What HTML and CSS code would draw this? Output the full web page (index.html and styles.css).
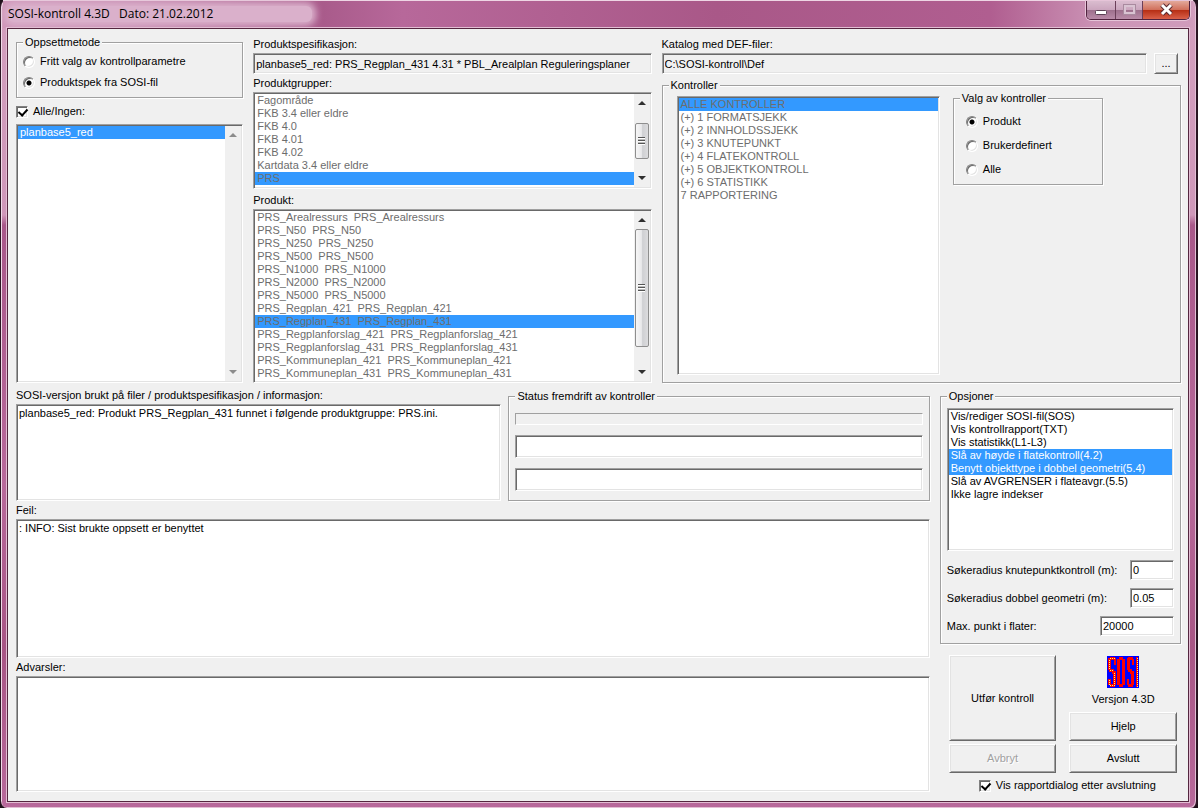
FILE: index.html
```html
<!DOCTYPE html>
<html lang="no">
<head>
<meta charset="utf-8">
<title>SOSI-kontroll 4.3D</title>
<link rel="stylesheet" href="styles.css">
</head>
<body>
<div class="window">
  <header class="titlebar">
    <h1 class="title">SOSI-kontroll 4.3D &nbsp; Dato: 21.02.2012</h1>
    <div class="caption-buttons">
      <button class="cap cap-min" type="button" aria-label="Minimer">
        <svg width="28" height="18" viewBox="0 0 28 18"><rect x="8.500" y="9.500" width="11" height="4" rx="1" fill="#fff" stroke="#5b4254"/></svg>
      </button>
      <button class="cap cap-max" type="button" aria-label="Maksimer" disabled>
        <svg width="26" height="18" viewBox="0 0 26 18"><rect x="9" y="5" width="9" height="7" fill="none" stroke="#d9c3d2" stroke-width="2"/><rect x="7.500" y="3.500" width="12" height="10" fill="none" stroke="#a98a9f"/></svg>
      </button>
      <button class="cap cap-close" type="button" aria-label="Lukk">
        <svg width="46" height="18" viewBox="0 0 46 18"><path d="M19 4L28 13M28 4L19 13" stroke="#5a2a30" stroke-width="5"/><path d="M19 4L28 13M28 4L19 13" stroke="#fff" stroke-width="3"/></svg>
      </button>
    </div>
  </header>

  <main class="client">
    <section class="top">
      <div class="col">
        <fieldset class="group">
          <legend>Oppsettmetode</legend>
          <div class="radios radios-setup">
            <label class="check"><input type="radio" name="oppsett"> Fritt valg av kontrollparametre</label>
            <label class="check"><input type="radio" name="oppsett" checked> Produktspek fra SOSI-fil</label>
          </div>
        </fieldset>
        <label class="check check-all"><input type="checkbox" checked> Alle/Ingen:</label>
        <div class="sunken listbox grow">
          <select multiple size="4" aria-label="Filer"><option selected>planbase5_red</option></select>
          <div class="scroll scroll-off" aria-hidden="true">
            <svg class="arrow" viewBox="0 0 8 4"><path d="M0 4L4 0L8 4Z"/></svg>
            <div class="track"></div>
            <svg class="arrow" viewBox="0 0 8 4"><path d="M0 0L8 0L4 4Z"/></svg>
          </div>
        </div>
      </div>

      <div class="col">
        <label class="caption" for="spec">Produktspesifikasjon:</label>
        <input class="sunken field gray" id="spec" readonly value="planbase5_red: PRS_Regplan_431 4.31 * PBL_Arealplan Reguleringsplaner">
        <label class="caption" for="grp">Produktgrupper:</label>
        <div class="sunken listbox list-groups">
          <select id="grp" size="7" disabled>
            <option>Fagområde</option><option>FKB 3.4 eller eldre</option><option>FKB 4.0</option><option>FKB 4.01</option><option>FKB 4.02</option><option>Kartdata 3.4 eller eldre</option><option selected>PRS</option><option>Sosi</option>
          </select>
          <div class="scroll" aria-hidden="true">
            <svg class="arrow" viewBox="0 0 8 4"><path d="M0 4L4 0L8 4Z"/></svg>
            <div class="track"><div class="thumb thumb-groups"><i class="grip"></i></div></div>
            <svg class="arrow" viewBox="0 0 8 4"><path d="M0 0L8 0L4 4Z"/></svg>
          </div>
        </div>
        <label class="caption" for="prod">Produkt:</label>
        <div class="sunken listbox grow">
          <select id="prod" size="4" disabled>
            <option>PRS_Arealressurs &nbsp;PRS_Arealressurs</option>
            <option>PRS_N50 &nbsp;PRS_N50</option>
            <option>PRS_N250 &nbsp;PRS_N250</option>
            <option>PRS_N500 &nbsp;PRS_N500</option>
            <option>PRS_N1000 &nbsp;PRS_N1000</option>
            <option>PRS_N2000 &nbsp;PRS_N2000</option>
            <option>PRS_N5000 &nbsp;PRS_N5000</option>
            <option>PRS_Regplan_421 &nbsp;PRS_Regplan_421</option>
            <option selected>PRS_Regplan_431 &nbsp;PRS_Regplan_431</option>
            <option>PRS_Regplanforslag_421 &nbsp;PRS_Regplanforslag_421</option>
            <option>PRS_Regplanforslag_431 &nbsp;PRS_Regplanforslag_431</option>
            <option>PRS_Kommuneplan_421 &nbsp;PRS_Kommuneplan_421</option>
            <option>PRS_Kommuneplan_431 &nbsp;PRS_Kommuneplan_431</option>
            <option>PRS_Servformål &nbsp;PRS_Servformål</option>
          </select>
          <div class="scroll" aria-hidden="true">
            <svg class="arrow" viewBox="0 0 8 4"><path d="M0 4L4 0L8 4Z"/></svg>
            <div class="track"><div class="thumb thumb-products"><i class="grip"></i></div></div>
            <svg class="arrow" viewBox="0 0 8 4"><path d="M0 0L8 0L4 4Z"/></svg>
          </div>
        </div>
      </div>

      <div class="col">
        <label class="caption" for="def">Katalog med DEF-filer:</label>
        <div class="path-row">
          <input class="sunken field gray" id="def" readonly value="C:\SOSI-kontroll\Def">
          <button class="btn btn-browse" type="button">...</button>
        </div>
        <fieldset class="group grow group-checks">
          <legend>Kontroller</legend>
          <div class="checks">
            <div class="sunken listbox">
              <select size="4" disabled aria-label="Kontroller">
                <option selected>ALLE KONTROLLER</option><option>(+) 1 FORMATSJEKK</option><option>(+) 2 INNHOLDSSJEKK</option><option>(+) 3 KNUTEPUNKT</option><option>(+) 4 FLATEKONTROLL</option><option>(+) 5 OBJEKTKONTROLL</option><option>(+) 6 STATISTIKK</option><option>7 RAPPORTERING</option>
              </select>
            </div>
            <fieldset class="group group-choice">
              <legend>Valg av kontroller</legend>
              <div class="radios radios-choice">
                <label class="check"><input type="radio" name="valg" checked> Produkt</label>
                <label class="check"><input type="radio" name="valg"> Brukerdefinert</label>
                <label class="check"><input type="radio" name="valg"> Alle</label>
              </div>
            </fieldset>
          </div>
        </fieldset>
      </div>
    </section>

    <section class="bottom">
      <div class="col">
        <div class="info-row">
          <div class="col">
            <label class="caption" for="info">SOSI-versjon brukt på filer / produktspesifikasjon / informasjon:</label>
            <textarea class="sunken memo grow" id="info" readonly>planbase5_red: Produkt PRS_Regplan_431 funnet i følgende produktgruppe: PRS.ini.</textarea>
          </div>
          <fieldset class="group group-status">
            <legend>Status fremdrift av kontroller</legend>
            <div class="status">
              <div class="bar"></div>
              <input class="sunken field" readonly aria-label="Status 1">
              <input class="sunken field" readonly aria-label="Status 2">
            </div>
          </fieldset>
        </div>
        <label class="caption" for="feil">Feil:</label>
        <textarea class="sunken memo memo-errors" id="feil" readonly>: INFO: Sist brukte oppsett er benyttet</textarea>
        <label class="caption" for="adv">Advarsler:</label>
        <textarea class="sunken memo memo-warnings" id="adv" readonly></textarea>
      </div>

      <div class="col side">
        <fieldset class="group group-options">
          <legend>Opsjoner</legend>
          <div class="options">
            <div class="sunken listbox list-options">
              <select multiple size="4" aria-label="Opsjoner">
                <option>Vis/rediger SOSI-fil(SOS)</option><option>Vis kontrollrapport(TXT)</option><option>Vis statistikk(L1-L3)</option><option selected>Slå av høyde i flatekontroll(4.2)</option><option selected>Benytt objekttype i dobbel geometri(5.4)</option><option>Slå av AVGRENSER i flateavgr.(5.5)</option><option>Ikke lagre indekser</option>
              </select>
            </div>
            <div class="param"><label for="p1">Søkeradius knutepunktkontroll (m):</label><input class="sunken field" id="p1" value="0"></div>
            <div class="param"><label for="p2">Søkeradius dobbel geometri (m):</label><input class="sunken field" id="p2" value="0.05"></div>
            <div class="param"><label for="p3">Max. punkt i flater:</label><input class="sunken field wide" id="p3" value="20000"></div>
          </div>
        </fieldset>
        <div class="actions">
          <div class="action-col">
            <button class="btn btn-run" type="button">Utfør kontroll</button>
            <button class="btn" type="button" disabled>Avbryt</button>
          </div>
          <div class="action-col">
            <div class="about">
              <svg class="logo" viewBox="0 0 32 32" role="img" aria-label="SOSI" shape-rendering="crispEdges">
                <rect width="32" height="32" fill="#00f"/>
                <g fill="#f00">
                  <rect x="3" y="1" width="5" height="3"/><rect x="1" y="2" width="3" height="12"/><rect x="7" y="2" width="2" height="7"/><rect x="2" y="13" width="5" height="3"/><rect x="5" y="15" width="4" height="3"/><rect x="6" y="17" width="3" height="12"/><rect x="1" y="23" width="3" height="6"/><rect x="3" y="28" width="5" height="3"/>
                  <rect x="12" y="1" width="4" height="3"/><rect x="10" y="3" width="3" height="26"/><rect x="15" y="3" width="3" height="26"/><rect x="12" y="28" width="4" height="3"/>
                  <rect x="21" y="1" width="5" height="3"/><rect x="20" y="2" width="3" height="12"/><rect x="25" y="3" width="2" height="6"/><rect x="21" y="13" width="4" height="3"/><rect x="23" y="15" width="4" height="3"/><rect x="24" y="17" width="3" height="12"/><rect x="20" y="23" width="2" height="6"/><rect x="21" y="28" width="5" height="3"/>
                  <rect x="29" y="1" width="2" height="30"/>
                </g>
                <g stroke="#ff6" stroke-width="1" stroke-dasharray="1 1">
                  <path d="M2.500 4V14M3 2.500H8M3 14.500H7M7.500 17V29M3 29.500H8M2.500 24V29M30.500 2V31"/>
                </g>
              </svg>
              <span>Versjon 4.3D</span>
            </div>
            <button class="btn" type="button">Hjelp</button>
            <button class="btn" type="button">Avslutt</button>
          </div>
        </div>
        <label class="check check-report"><input type="checkbox" checked> Vis rapportdialog etter avslutning</label>
      </div>
    </section>
  </main>
</div>
</body>
</html>
```
FILE: styles.css
```css
* { box-sizing: border-box; }

body {
  margin: 0;
  background: #1c1018;
  color: #000;
  font: 11px/13px "Liberation Sans", Arial, sans-serif;
}

button, input, select, textarea { margin: 0; font: inherit; color: inherit; border-radius: 0; outline: 0; }

.window {
  display: flex;
  flex-direction: column;
  min-height: 100vh;
  padding: 0 7px 6px 6px;
  border: solid #2a1522;
  border-width: 0 2px 0 1px;
  border-radius: 7px;
  background: linear-gradient(#d39fbe 0, #cf97b9 215px, #a9588a 225px, #b8699b 60%, #a85585 80%, #b8699b);
  box-shadow: inset 1px 1px #f0dbe8, inset -1px -1px #e3bfd5;
}

.titlebar {
  display: flex;
  flex: none;
  align-items: flex-start;
  justify-content: space-between;
  height: 28px;
  margin: 0 -4px 0 -4px;
  padding-left: 5px;
  border-top: 1px solid #eed5e4;
  background: linear-gradient(90deg, #cf95b8 0, #c88cb1 120px, #a95b8b 320px, #b7689a 400px, #a95888 60%, #b05e90 83%, #cb93b5 92%, #d09cbc);
}
.title {
  width: 304px;
  margin: 5px 0 0;
  border-radius: 6px;
  background: #dab0cb;
  box-shadow: 0 0 7px 4px #dab0cb;
  font: 12px/16px "Open Sans", "Noto Sans", sans-serif;
  white-space: nowrap;
}

.caption-buttons {
  display: flex;
  height: 19px;
  margin-right: 3px;
  border: 1px solid #50233e;
  border-top: 0;
  border-radius: 0 0 5px 5px;
  box-shadow: 0 0 0 1px #e6c4d8;
  overflow: hidden;
}
.cap { display: block; padding: 0; border: 0; border-right: 1px solid #6b3f59; background: linear-gradient(#dabccf 0, #cba6be 48%, #9d6f8c 50%, #b98ba8); }
.cap:last-child { border-right: 0; background: linear-gradient(#e3a99b 0, #d1705c 48%, #b52d13 50%, #d9604a); }
.cap svg { display: block; }

.client {
  display: flex;
  flex: 1;
  flex-direction: column;
  gap: 3px;
  padding: 7px 7px 9px 8px;
  border: 1px solid #54263f;
  outline: 1px solid #e2bdd3;
  background: #f0f0f0;
}
.top { display: grid; flex: 349 1 0; grid-template-columns: 227fr 398fr 519fr; gap: 10px; }
.bottom { display: grid; flex: 404 1 0; grid-template-columns: 913fr 241fr; gap: 10px; }
.col { display: flex; flex-direction: column; min-width: 0; min-height: 0; }
.grow { flex: 1 1 0; }

.caption { flex: none; margin: 1px 0; line-height: 16px; white-space: nowrap; }
.top .caption:first-child { margin-top: 0; }

.sunken {
  padding: 1px;
  border: 1px solid;
  border-color: #a0a0a0 #fff #fff #a0a0a0;
  background: #fff;
  box-shadow: inset 1px 1px #696969, inset -1px -1px #e3e3e3;
}
.field { width: 100%; height: 21px; padding: 1px 2px; }
.gray { background: #f0f0f0; }
.memo { display: block; width: 100%; min-height: 0; padding: 2px; resize: none; }

.listbox { display: flex; min-height: 0; overflow: hidden; }
.listbox select {
  flex: 1 1 0;
  width: 100%;
  min-width: 0;
  height: auto;
  min-height: 0;
  padding: 0;
  border: 0;
  background: #fff;
  opacity: 1;
  overflow: hidden;
  scrollbar-width: none;
}
.listbox.grow select, .list-groups select { height: 0; min-height: 100%; }
.listbox option { height: 13px; min-height: 13px; padding: 0 2px; line-height: 13px; -webkit-text-fill-color: #000; }
.listbox option:checked { background: linear-gradient(#39f, #39f); -webkit-text-fill-color: #fff; }
.listbox select:disabled option { -webkit-text-fill-color: #6d6d6d; }
.list-groups { flex: none; height: 97px; margin-bottom: 2px; }
.list-options { height: 143px; margin-bottom: 1px; }

.scroll { display: flex; flex: none; flex-direction: column; align-items: center; width: 16px; background: #f0f0f0; }
.arrow { flex: none; width: 8px; height: 4px; margin: 7px 0; fill: #303030; }
.scroll-off .arrow { fill: #8c8c8c; }
.track { flex: 1; width: 14px; min-height: 0; }
.thumb {
  display: flex;
  align-items: center;
  justify-content: center;
  border: 1px solid #8e8e8e;
  border-radius: 2px;
  background: linear-gradient(90deg, #f6f6f6, #e9e9eb 45%, #cfd0d3 55%, #dcdcde);
}
.thumb-groups { height: 36px; margin-top: 11px; }
.thumb-products { height: 118px; }
.grip { width: 7px; height: 8px; background: repeating-linear-gradient(#555 0 1px, #fff 1px 2px, #bbb 2px 3px); }

.group {
  min-width: 0;
  margin: 0;
  padding: 0 6px;
  border: 1px solid #a0a0a0;
  box-shadow: 1px 1px #fff, inset 1px 1px #fff;
}
.group legend { padding: 0 2px; line-height: 13px; background: #f0f0f0; }
.radios { display: flex; flex-direction: column; }
.radios-setup { gap: 8px; padding: 6px 0 8px; }
.radios-choice { gap: 11px; padding: 10px 0 8px 6px; }

.check { display: flex; flex: none; align-items: center; gap: 5px; height: 13px; white-space: nowrap; }
.check-all { margin: 7px 0 6px; }
.check-report { margin: 6px 0 0 39px; }
.check input {
  appearance: none;
  flex: none;
  width: 12px;
  height: 12px;
  border: 1px solid;
  border-color: #808080 #fff #fff #808080;
  background: #fff;
  box-shadow: inset 1px 1px #696969, inset -1px -1px #e3e3e3;
}
.check input[type="radio"] { border-radius: 50%; }
.check input[type="radio"]:checked { background: radial-gradient(circle, #000 0 2px, #fff 3px); }
.check input[type="checkbox"]:checked::before {
  content: "";
  display: block;
  width: 4px;
  height: 7px;
  margin: 0 0 0 3px;
  border: solid #000;
  border-width: 0 2px 2px 0;
  transform: rotate(42deg);
}

.path-row { display: flex; gap: 7px; padding-right: 3px; }
.btn {
  padding: 0;
  border: 1px solid;
  border-color: #fff #696969 #696969 #fff;
  background: #f0f0f0;
  box-shadow: inset 1px 1px #e3e3e3, inset -1px -1px #a0a0a0;
}
.btn:disabled { color: #a0a0a0; text-shadow: 1px 1px #fff; }
.btn-browse { flex: none; width: 24px; }

.group-checks { display: grid; margin-top: 5px; }
.checks { display: grid; grid-template-columns: 263fr 150fr; gap: 13px; margin: 4px 71px 7px 8px; }
.group-choice { align-self: start; margin-top: -4px; }

.info-row { display: grid; flex: none; grid-template-columns: 485fr 421fr; gap: 7px; height: 115px; }
.group-status { margin-top: 4px; }
.status { display: grid; gap: 10px; padding: 10px 0 7px; }
.status .field { height: 23px; }
.bar { height: 12px; border: 1px solid; border-color: #a0a0a0 #fff #fff #a0a0a0; }
.memo-errors { flex: 139 1 0; }
.memo-warnings { flex: 115 1 0; }

.group-options { flex: none; margin-top: 4px; }
.options { display: flex; flex-direction: column; gap: 8px; padding: 5px 0 7px; }
.param { display: flex; align-items: center; justify-content: space-between; white-space: nowrap; }
.param .field { width: 44px; height: 20px; }
.param .wide { width: 74px; }

.actions { display: grid; grid-template-columns: 1fr 1fr; gap: 13px; padding: 11px 4px 0 9px; }
.action-col { display: grid; gap: 3px; grid-auto-rows: 29px; }
.action-col .btn-run { height: 86px; }
.action-col:first-child { grid-template-rows: 86px; }
.action-col:last-child { grid-template-rows: 54px; }
.about { display: flex; flex-direction: column; align-items: center; gap: 5px; padding-top: 1px; }
.logo { width: 32px; height: 32px; }
```
